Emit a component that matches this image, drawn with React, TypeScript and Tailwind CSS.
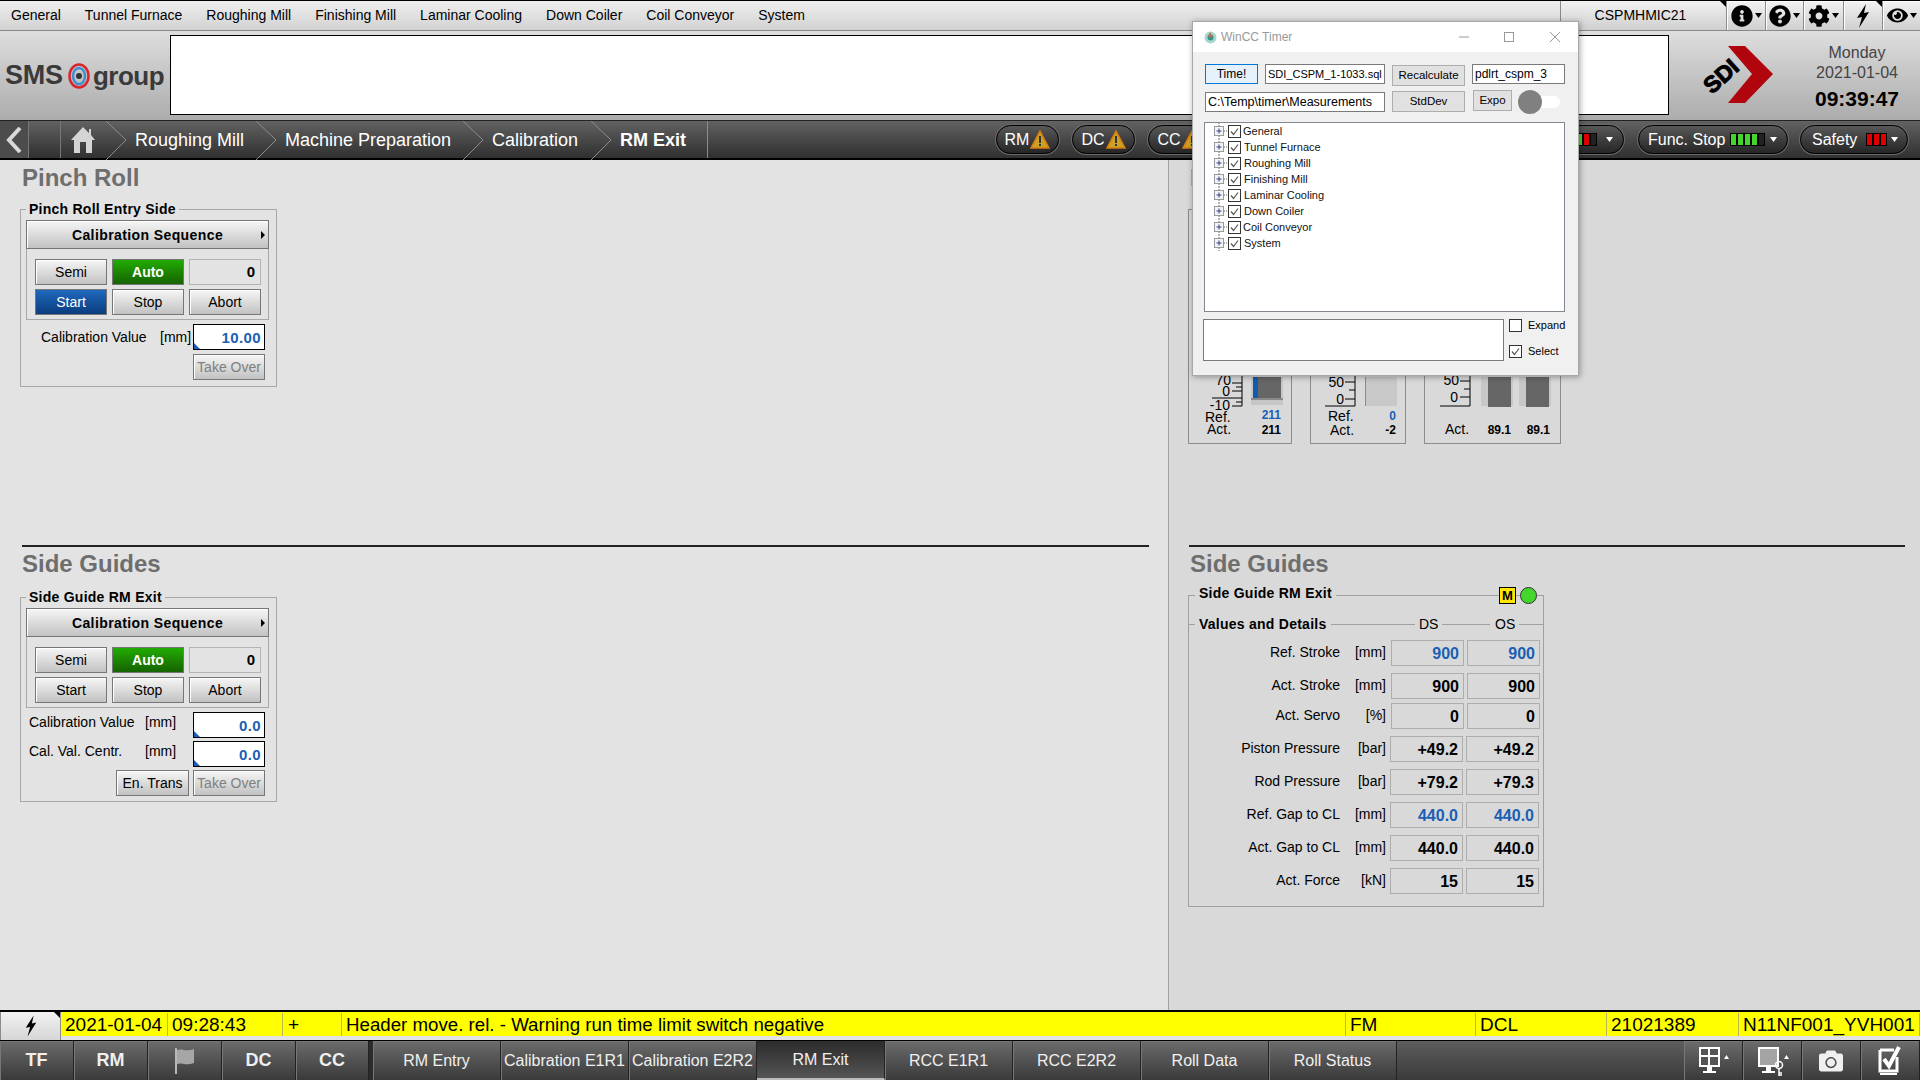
import type { ReactNode } from 'react';
import { FaCamera, FaCog, FaEye, FaInfoCircle, FaQuestionCircle } from 'react-icons/fa';

const grayBtn =
  'flex items-center justify-center border border-[#767676] bg-linear-to-b from-[#f6f6f6] to-[#c2c2c2] text-[14px] text-black shadow-[inset_1px_1px_0_#fff]';
const winBtn = 'flex items-center justify-center border border-[#adadad] bg-[#e1e1e1] text-[11.5px] text-black';
const winInput = 'flex items-center whitespace-nowrap border border-[#7a7a7a] bg-white pl-[2px] text-black';

function TinyArrow({ color = 'black' }: { color?: string }) {
  return (
    <svg width="7" height="5" viewBox="0 0 7 5" className="shrink-0">
      <polygon points="0,0 7,0 3.5,5" fill={color} />
    </svg>
  );
}

function CornerMark() {
  return (
    <svg width="6" height="6" viewBox="0 0 6 6" className="absolute top-0 right-0">
      <polygon points="0,0 6,0 6,6" fill="black" />
    </svg>
  );
}

function Bolt({ className }: { className?: string }) {
  return (
    <svg viewBox="0 0 16 24" className={className}>
      <polygon points="11,0 2,14 7,13 4,24 14,8 9,9" fill="black" />
    </svg>
  );
}

function TopButton({ width, children, mark }: { width: string; children: ReactNode; mark?: boolean }) {
  return (
    <div className={`relative flex h-[29px] ${width} items-center justify-center gap-[2px] border-l border-[#8a8a8a] bg-linear-to-b from-[#f2f2f2] to-[#cfcfcf] shadow-[inset_1px_1px_0_#fff]`}>
      {children}
      {mark && <CornerMark />}
    </div>
  );
}

function TopBar() {
  const menu = ['General', 'Tunnel Furnace', 'Roughing Mill', 'Finishing Mill', 'Laminar Cooling', 'Down Coiler', 'Coil Conveyor', 'System'];
  return (
    <div className="flex h-[31px] shrink-0 items-center border-t border-b border-t-black border-b-[#8a8a8a] bg-linear-to-b from-[#efefef] to-[#d2d2d2] text-[14px] text-black">
      <div className="flex w-[1560px] gap-[24px] pl-[11px]">
        {menu.map((m) => (
          <span key={m}>{m}</span>
        ))}
      </div>
      <div className="relative flex h-[29px] w-[166px] items-center justify-center border-l border-[#8a8a8a] bg-linear-to-b from-[#f2f2f2] to-[#cfcfcf] pr-[6px] text-[14px]">
        CSPMHMIC21
        <CornerMark />
      </div>
      <TopButton width="w-[39px]">
        <FaInfoCircle size={22} />
        <TinyArrow />
      </TopButton>
      <TopButton width="w-[38px]">
        <FaQuestionCircle size={22} />
        <TinyArrow />
      </TopButton>
      <TopButton width="w-[40px]">
        <FaCog size={22} />
        <TinyArrow />
      </TopButton>
      <TopButton width="w-[39px]" mark>
        <Bolt className="h-[24px] w-[16px]" />
      </TopButton>
      <TopButton width="w-[38px]">
        <FaEye size={21} />
        <TinyArrow />
      </TopButton>
    </div>
  );
}

function Header() {
  return (
    <div className="flex h-[89px] shrink-0 bg-linear-to-b from-[#dedede] to-[#acacac]">
      <div className="flex w-[170px] items-center pl-[5px] text-[27px] leading-none font-bold text-[#3a3a3a]">
        <span className="tracking-[-0.2px]">SMS</span>
        <svg width="22" height="26" viewBox="0 0 22 26" className="mr-[3px] ml-[5px] shrink-0">
          <ellipse cx="11" cy="13" rx="9.5" ry="11.5" fill="none" stroke="#d8262c" strokeWidth="2.5" />
          <ellipse cx="11" cy="13" rx="6" ry="8" fill="none" stroke="#3d8fd0" strokeWidth="2.5" />
          <circle cx="11" cy="13" r="3" fill="#333" />
        </svg>
        <span className="text-[26px] tracking-[-0.5px]">group</span>
      </div>
      <div className="mt-[4px] h-[80px] w-[1499px] border border-black bg-white" />
      <svg width="113" height="89" viewBox="1669 31 113 89">
        <polygon points="1728,46 1745,46 1773,74 1745,103 1728,103 1752,74" fill="#b0050d" />
        <text x="1721" y="84" textAnchor="middle" fontSize="23" fontWeight="700" fill="black" stroke="black" strokeWidth="1" transform="rotate(-42 1721 76)">
          SDI
        </text>
      </svg>
      <div className="flex flex-1 flex-col items-center pt-[12px] pl-[12px] text-[16px] leading-[19px] text-[#444]">
        <span>Monday</span>
        <span className="mt-[1px]">2021-01-04</span>
        <span className="mt-[5px] text-[21px] leading-[24px] font-bold text-black">09:39:47</span>
      </div>
    </div>
  );
}

function Crumb({ width, bold, children }: { width: string; bold?: boolean; children: ReactNode }) {
  return (
    <div className={`relative flex h-full ${width} items-center pt-[2px] pl-[29px] text-[18px] text-white ${bold ? 'font-bold' : ''}`}>
      <svg width="20" height="39" viewBox="0 0 20 39" className="absolute top-0 left-0">
        <polyline points="0,0 20,19 0,39" fill="none" stroke="#8c8c8c" strokeWidth="1" />
      </svg>
      {children}
    </div>
  );
}

function WarnTriangle() {
  return (
    <svg width="20" height="20" viewBox="0 0 20 20" className="shrink-0">
      <polygon points="10,1 19,18 1,18" fill="#c9a227" stroke="#d97a10" strokeWidth="1.5" />
      <rect x="9" y="6" width="2" height="7" fill="#333" />
      <rect x="9" y="14" width="2" height="2" fill="#333" />
    </svg>
  );
}

function Pill({ width, children, className = '' }: { width: string; children: ReactNode; className?: string }) {
  return (
    <div className={`flex h-[29px] ${width} items-center rounded-full border border-black bg-linear-to-b from-[#585858] to-[#262626] text-[16px] text-white shadow-[0_0_0_1px_#6a6a6a] ${className}`}>
      {children}
    </div>
  );
}

function Bars({ colors }: { colors: string[] }) {
  return (
    <div className="flex h-[13px]">
      {colors.map((c, i) => (
        <div key={i} className={`h-full w-[7px] border border-black ${c}`} />
      ))}
    </div>
  );
}

function BreadcrumbBar() {
  return (
    <div className="flex h-[40px] shrink-0 items-center border-t border-b-2 border-t-[#222] border-b-black bg-linear-to-b from-[#626262] to-[#303030]">
      <div className="flex h-full w-[29px] items-center justify-center border-r border-[#777] bg-[#4c4c4c]">
        <svg width="18" height="26" viewBox="0 0 18 26">
          <polyline points="15,1 4,13 15,25" fill="none" stroke="#d8d8d8" strokeWidth="4" />
        </svg>
      </div>
      <div className="h-full w-[32px] border-r border-[#777]" />
      <div className="flex h-full w-[45px] items-center pl-[10px]">
        <svg width="24" height="26" viewBox="0 0 24 26">
          <path d="M12 0 L18 6 V2 H20 V8 L24 13 L21 13 V26 H15 V15 H9 V26 H3 V13 L0 13 Z" fill="#d4d4d4" />
        </svg>
      </div>
      <Crumb width="w-[150px]">Roughing Mill</Crumb>
      <Crumb width="w-[207px]">Machine Preparation</Crumb>
      <Crumb width="w-[128px]">Calibration</Crumb>
      <Crumb width="w-[116px]" bold>
        RM Exit
      </Crumb>
      <div className="h-full w-px bg-[#8c8c8c]" />
      <div className="ml-[288px] flex gap-[13px]">
        <Pill width="w-[63px]" className="justify-center gap-[1px]">
          RM
          <WarnTriangle />
        </Pill>
        <Pill width="w-[63px]" className="justify-center gap-[1px]">
          DC
          <WarnTriangle />
        </Pill>
        <Pill width="w-[63px]" className="justify-center gap-[1px]">
          CC
          <WarnTriangle />
        </Pill>
      </div>
      <div className="ml-auto flex items-center gap-[12px] pr-[12px]">
        <Pill width="w-[160px]" className="mr-[2px] justify-end gap-[9px] pr-[10px]">
          <Bars colors={['bg-[#e00000]', 'bg-[#44d62c]', 'bg-[#e00000]', 'bg-[#222]']} />
          <TinyArrow color="white" />
        </Pill>
        <Pill width="w-[150px]" className="pl-[9px]">
          Func. Stop
          <div className="ml-[5px]">
            <Bars colors={['bg-[#44d62c]', 'bg-[#44d62c]', 'bg-[#44d62c]', 'bg-[#44d62c]', 'bg-[#222]']} />
          </div>
          <div className="ml-[5px]">
            <TinyArrow color="white" />
          </div>
        </Pill>
        <Pill width="w-[108px]" className="pl-[11px]">
          Safety
          <div className="ml-[9px]">
            <Bars colors={['bg-[#e00000]', 'bg-[#e00000]', 'bg-[#e00000]']} />
          </div>
          <div className="ml-[4px]">
            <TinyArrow color="white" />
          </div>
        </Pill>
      </div>
    </div>
  );
}

function Legend({ children }: { children: ReactNode }) {
  return <legend className="px-[3px] text-[14px] leading-4 font-bold tracking-[0.25px] text-black">{children}</legend>;
}

function SeqButton() {
  return (
    <div className={`${grayBtn} relative mt-[3px] h-[29px] w-[243px] pt-px font-bold tracking-[0.4px]`}>
      Calibration Sequence
      <svg width="4" height="8" viewBox="0 0 4 8" className="absolute top-[10px] right-[3px]">
        <polygon points="0,0 4,4 0,8" fill="black" />
      </svg>
    </div>
  );
}

function SeqGroup({ startActive }: { startActive?: boolean }) {
  return (
    <div className="flex h-[71px] w-[243px] flex-col gap-[4px] border-x border-b border-[#a8a8a8] pt-[10px] pl-[8px]">
      <div className="flex gap-[5px]">
        <div className={`${grayBtn} h-[26px] w-[72px]`}>Semi</div>
        <div className="flex h-[26px] w-[72px] items-center justify-center border border-[#767676] bg-linear-to-b from-[#22ac04] to-[#156300] text-[14px] font-bold text-white">Auto</div>
        <div className="flex h-[26px] w-[72px] items-center justify-end border border-[#b4b4b4] pr-[5px] text-[15px] font-bold text-black">0</div>
      </div>
      <div className="flex gap-[5px]">
        {startActive ? (
          <div className="flex h-[26px] w-[72px] items-center justify-center border border-[#767676] bg-linear-to-b from-[#2069bd] to-[#0a3d7e] text-[14px] text-white">Start</div>
        ) : (
          <div className={`${grayBtn} h-[26px] w-[72px]`}>Start</div>
        )}
        <div className={`${grayBtn} h-[26px] w-[72px]`}>Stop</div>
        <div className={`${grayBtn} h-[26px] w-[72px]`}>Abort</div>
      </div>
    </div>
  );
}

function ValueInput({ value }: { value: string }) {
  return (
    <div className="relative flex h-[26px] w-[72px] items-center justify-end border border-black bg-white pt-[2px] pr-[3px] text-[15px] font-bold tracking-[0.4px] text-[#1a5fb4]">
      {value}
      <svg width="6" height="6" viewBox="0 0 6 6" className="absolute bottom-0 left-0">
        <polygon points="0,0 6,6 0,6" fill="#1a5fb4" />
      </svg>
    </div>
  );
}

function TakeOver() {
  return <div className={`${grayBtn} h-[26px] w-[72px] text-[#808080]!`}>Take Over</div>;
}

function PinchRollBox() {
  return (
    <fieldset className="mt-[9px] w-[257px] border border-[#a8a8a8] px-[5px] pb-[6px]">
      <Legend>Pinch Roll Entry Side</Legend>
      <SeqButton />
      <SeqGroup startActive />
      <div className="mt-[4px] flex items-center text-[14px] text-black">
        <span className="ml-[15px] w-[119px] pt-px">Calibration Value</span>
        <span className="w-[33px] pt-px">[mm]</span>
        <ValueInput value="10.00" />
      </div>
      <div className="mt-[4px] ml-[167px]">
        <TakeOver />
      </div>
    </fieldset>
  );
}

function SideGuideBox() {
  return (
    <fieldset className="mt-[11px] w-[257px] border border-[#a8a8a8] px-[5px] pb-[5px]">
      <Legend>Side Guide RM Exit</Legend>
      <SeqButton />
      <SeqGroup />
      <div className="mt-[4px] flex text-[14px] text-black">
        <span className="ml-[3px] w-[116px]">Calibration Value</span>
        <span className="w-[48px]">[mm]</span>
        <ValueInput value="0.0" />
      </div>
      <div className="mt-[3px] flex text-[14px] text-black">
        <span className="ml-[3px] w-[116px]">Cal. Val. Centr.</span>
        <span className="w-[48px]">[mm]</span>
        <ValueInput value="0.0" />
      </div>
      <div className="mt-[3px] ml-[90px] flex gap-[4px]">
        <div className={`${grayBtn} h-[26px] w-[73px]`}>En. Trans</div>
        <TakeOver />
      </div>
    </fieldset>
  );
}

function ScaleText({ x, y, children, anchor = 'end', bold, fill = 'black' }: { x: number; y: number; children: string; anchor?: 'start' | 'end'; bold?: boolean; fill?: string }) {
  return (
    <text x={x} y={y} textAnchor={anchor} fontSize={bold ? 12 : 14} fontWeight={bold ? 700 : 400} fill={fill}>
      {children}
    </text>
  );
}

function GaugeBox({ width, view, children }: { width: string; view: string; children: ReactNode }) {
  return (
    <div className={`h-[235px] ${width} border border-[#8c8c8c]`}>
      <svg viewBox={view} className="h-full w-full">
        {children}
      </svg>
    </div>
  );
}

function Gauges() {
  return (
    <div className="mt-[17px] flex">
      <GaugeBox width="w-[104px]" view="1188 209 102 233">
        <path d="M1241 370 V405 M1231 382 H1241 M1235 386 H1241 M1231 390 H1241 M1211 397 H1241 M1235 401 H1241 M1231 405 H1241" stroke="black" fill="none" />
        <ScaleText x={1230} y={384}>70</ScaleText>
        <ScaleText x={1229} y={395}>0</ScaleText>
        <ScaleText x={1229} y={409}>-10</ScaleText>
        <rect x="1250" y="376" width="32" height="28" fill="#c6c6c6" />
        <rect x="1257" y="376" width="23" height="21" fill="#666" />
        <rect x="1252" y="376" width="5" height="21" fill="#0f5cb0" />
        <rect x="1250" y="397" width="32" height="2" fill="#8a8a8a" />
        <ScaleText x={1204} y={421} anchor="start">Ref.</ScaleText>
        <ScaleText x={1206} y={433} anchor="start">Act.</ScaleText>
        <ScaleText x={1280} y={418} bold fill="#1a5fb4">211</ScaleText>
        <ScaleText x={1280} y={433} bold>211</ScaleText>
      </GaugeBox>
      <div className="ml-[18px]">
        <GaugeBox width="w-[96px]" view="1310 209 94 233">
          <path d="M1354 370 V405 M1344 381 H1354 M1348 389 H1354 M1344 398 H1354 M1324 405 H1354" stroke="black" fill="none" />
          <ScaleText x={1343} y={386}>50</ScaleText>
          <ScaleText x={1343} y={403}>0</ScaleText>
          <rect x="1364" y="376" width="32" height="29" fill="#c8c8c8" />
          <rect x="1364" y="376" width="1" height="29" fill="#8a8a8a" />
          <ScaleText x={1327} y={420} anchor="start">Ref.</ScaleText>
          <ScaleText x={1329} y={434} anchor="start">Act.</ScaleText>
          <ScaleText x={1395} y={419} bold fill="#1a5fb4">0</ScaleText>
          <ScaleText x={1395} y={433} bold>-2</ScaleText>
        </GaugeBox>
      </div>
      <div className="ml-[18px]">
        <GaugeBox width="w-[137px]" view="1424 209 135 233">
          <path d="M1469 370 V405 M1459 380 H1469 M1463 388 H1469 M1459 396 H1469 M1439 405 H1469" stroke="black" fill="none" />
          <ScaleText x={1458} y={384}>50</ScaleText>
          <ScaleText x={1457} y={401}>0</ScaleText>
          <rect x="1480" y="376" width="32" height="29" fill="#c8c8c8" />
          <rect x="1487" y="376" width="23" height="30" fill="#666" />
          <rect x="1518" y="376" width="32" height="29" fill="#c8c8c8" />
          <rect x="1525" y="376" width="23" height="30" fill="#666" />
          <ScaleText x={1444} y={433} anchor="start">Act.</ScaleText>
          <ScaleText x={1510} y={433} bold>89.1</ScaleText>
          <ScaleText x={1549} y={433} bold>89.1</ScaleText>
        </GaugeBox>
      </div>
    </div>
  );
}

interface DetailRow {
  label: string;
  unit: string;
  ds: string;
  os: string;
  blue?: boolean;
  top: string;
  inset: string;
}

const detailRows: DetailRow[] = [
  { label: 'Ref. Stroke', unit: '[mm]', ds: '900', os: '900', blue: true, top: 'mt-[8px]', inset: 'ml-[5px]' },
  { label: 'Act. Stroke', unit: '[mm]', ds: '900', os: '900', top: 'mt-[7px]', inset: 'ml-[5px]' },
  { label: 'Act. Servo', unit: '[%]', ds: '0', os: '0', top: 'mt-[4px]', inset: 'ml-[5px]' },
  { label: 'Piston Pressure', unit: '[bar]', ds: '+49.2', os: '+49.2', top: 'mt-[7px]', inset: 'ml-[4px]' },
  { label: 'Rod Pressure', unit: '[bar]', ds: '+79.2', os: '+79.3', top: 'mt-[7px]', inset: 'ml-[4px]' },
  { label: 'Ref. Gap to CL', unit: '[mm]', ds: '440.0', os: '440.0', blue: true, top: 'mt-[7px]', inset: 'ml-[4px]' },
  { label: 'Act. Gap to CL', unit: '[mm]', ds: '440.0', os: '440.0', top: 'mt-[7px]', inset: 'ml-[4px]' },
  { label: 'Act. Force', unit: '[kN]', ds: '15', os: '15', top: 'mt-[7px]', inset: 'ml-[4px]' },
];

function ValueCell({ value, blue }: { value: string; blue?: boolean }) {
  return (
    <div className={`flex h-[26px] w-[73px] items-center justify-end border border-[#adadad] pt-px pr-[4px] text-[16px] font-bold ${blue ? 'text-[#1a5fb4]' : 'text-black'}`}>
      {value}
    </div>
  );
}

function DetailsBox() {
  return (
    <fieldset className="relative mt-[9px] w-[356px] border border-[#a0a0a0] pb-[12px]">
      <legend className="relative -top-[2px] ml-[6px] px-[4px] text-[14px] leading-4 font-bold tracking-[0.25px] text-black">Side Guide RM Exit</legend>
      <div className="absolute -top-[16px] right-[6px] flex gap-[4px]">
        <div className="flex h-[17px] w-[17px] items-center justify-center border border-black bg-[#ffe600] text-[13px] font-bold text-black">M</div>
        <div className="h-[17px] w-[17px] rounded-full border border-[#333] bg-[#44d62c]" />
      </div>
      <div className="mt-[13px] flex h-4 items-center text-[14px] text-black">
        <div className="h-px w-[6px] bg-[#a0a0a0]" />
        <span className="ml-[4px] w-[128px] whitespace-nowrap font-bold tracking-[0.25px]">Values and Details</span>
        <div className="ml-[4px] h-px w-[84px] bg-[#a0a0a0]" />
        <span className="ml-[4px] w-[19px]">DS</span>
        <div className="ml-[4px] h-px w-[48px] bg-[#a0a0a0]" />
        <span className="ml-[5px] w-[20px]">OS</span>
        <div className="ml-[4px] h-px flex-1 bg-[#a0a0a0]" />
      </div>
      {detailRows.map((r) => (
        <div key={r.label} className={`flex items-center text-[14px] text-black ${r.top}`}>
          <span className="w-[151px] pb-[2px] text-right">{r.label}</span>
          <span className="w-[46px] pb-[2px] text-right">{r.unit}</span>
          <div className={`flex gap-[3px] ${r.inset}`}>
            <ValueCell value={r.ds} blue={r.blue} />
            <ValueCell value={r.os} blue={r.blue} />
          </div>
        </div>
      ))}
    </fieldset>
  );
}

function Content() {
  return (
    <div className="flex h-[850px] shrink-0">
      <div className="w-[1169px] border-r border-[#a0a0a0] bg-[#e3e3e3] pl-[20px]">
        <div className="h-[385px] pt-[4px]">
          <h2 className="pl-[2px] text-[24px] leading-[28px] font-bold text-[#6e6e6e]">Pinch Roll</h2>
          <PinchRollBox />
        </div>
        <div className="ml-[2px] h-[2px] w-[1127px] bg-[#222]" />
        <div className="pt-[3px]">
          <h2 className="pl-[2px] text-[24px] leading-[28px] font-bold text-[#6e6e6e]">Side Guides</h2>
          <SideGuideBox />
        </div>
      </div>
      <div className="flex-1 bg-[#d9d9d9] pl-[19px]">
        <div className="h-[385px] pt-[4px]">
          <h2 className="pl-[2px] text-[24px] leading-[28px] font-bold text-[#6e6e6e]">Pinch Roll</h2>
          <Gauges />
        </div>
        <div className="ml-[1px] h-[2px] w-[716px] bg-[#222]" />
        <div className="pt-[3px]">
          <h2 className="pl-[2px] text-[24px] leading-[28px] font-bold text-[#6e6e6e]">Side Guides</h2>
          <DetailsBox />
        </div>
      </div>
    </div>
  );
}

function AlarmBar() {
  const cells = [
    { w: 'w-[107px]', t: '2021-01-04' },
    { w: 'w-[115px]', t: '09:28:43' },
    { w: 'w-[59px]', t: '+', pad: 'pl-[5px]' },
    { w: 'w-[1004px] text-[18.7px]', t: 'Header move. rel. - Warning run time limit switch negative' },
    { w: 'w-[130px]', t: 'FM' },
    { w: 'w-[131px]', t: 'DCL' },
    { w: 'w-[132px]', t: '21021389' },
    { w: 'flex-1', t: 'N11NF001_YVH001' },
  ];
  return (
    <div className="flex h-[30px] shrink-0 border-t-2 border-black bg-[#e3e3e3]">
      <div className="relative flex h-full w-[61px] items-center justify-center border-x border-[#8a8a8a] bg-linear-to-b from-[#f2f2f2] to-[#d6d6d6]">
        <Bolt className="h-[22px] w-[14px]" />
        <CornerMark />
      </div>
      <div className="flex h-[24px] flex-1 bg-[#ffff00] pt-px text-[19px] leading-[23px] text-black">
        {cells.map((c) => (
          <div key={c.t} className={`${c.w} overflow-hidden whitespace-nowrap border-r border-[#b9b950] ${c.pad ?? 'pl-[4px]'}`}>
            {c.t}
          </div>
        ))}
      </div>
    </div>
  );
}

function NavButton({ width, children, active, bold }: { width: string; children: ReactNode; active?: boolean; bold?: boolean }) {
  return (
    <div
      className={`flex h-full ${width} items-center justify-center border-r border-[#222] text-[#f0f0f0] ${bold ? 'text-[18px] font-bold' : 'text-[16px]'} ${
        active ? 'border-b-2 border-b-[#bbb] bg-linear-to-b from-[#2c2c2c] to-[#555]' : 'bg-linear-to-b from-[#6c6c6c] to-[#3a3a3a] shadow-[inset_1px_1px_0_#777]'
      }`}
    >
      {children}
    </div>
  );
}

function BottomNav() {
  return (
    <div className="flex h-[40px] shrink-0 border-t border-black bg-linear-to-b from-[#5e5e5e] to-[#3a3a3a]">
      <NavButton width="w-[74px]" bold>TF</NavButton>
      <NavButton width="w-[74px]" bold>RM</NavButton>
      <NavButton width="w-[74px]">
        <svg width="22" height="26" viewBox="0 0 22 26">
          <rect x="1" y="0" width="2" height="26" fill="#b8b8b8" />
          <path d="M3 2 C8 0 12 4 20 1 V15 C12 18 8 14 3 16 Z" fill="#a6a6a6" />
        </svg>
      </NavButton>
      <NavButton width="w-[74px]" bold>DC</NavButton>
      <NavButton width="w-[73px]" bold>CC</NavButton>
      <div className="h-full w-[4px] bg-[#2c2c2c]" />
      <NavButton width="w-[128px]">RM Entry</NavButton>
      <NavButton width="w-[128px]">Calibration E1R1</NavButton>
      <NavButton width="w-[128px]">Calibration E2R2</NavButton>
      <NavButton width="w-[128px]" active>RM Exit</NavButton>
      <NavButton width="w-[128px]">RCC E1R1</NavButton>
      <NavButton width="w-[128px]">RCC E2R2</NavButton>
      <NavButton width="w-[128px]">Roll Data</NavButton>
      <NavButton width="w-[128px]">Roll Status</NavButton>
      <div className="w-[287px]" />
      <NavButton width="w-[59px]">
        <svg width="34" height="30" viewBox="0 0 34 30" className="ml-[3px]">
          <rect x="1" y="1" width="21" height="20" fill="white" />
          <path d="M3 3 H10 V9 H3 Z M12 3 H20 V9 H12 Z M3 11 H10 V19 H3 Z M12 11 H20 V19 H12 Z" fill="#555" />
          <rect x="9" y="21" width="5" height="4" fill="white" />
          <rect x="5" y="25" width="13" height="2" fill="white" />
          <polygon points="26,13 31,13 28.5,9" fill="white" />
        </svg>
      </NavButton>
      <NavButton width="w-[59px]">
        <svg width="34" height="30" viewBox="0 0 34 30" className="ml-[3px]">
          <rect x="1" y="1" width="21" height="20" fill="white" />
          <rect x="3" y="3" width="17" height="16" fill="#a4a4a4" />
          <rect x="9" y="21" width="5" height="4" fill="white" />
          <rect x="5" y="25" width="13" height="2" fill="white" />
          <circle cx="22" cy="19" r="3.5" fill="none" stroke="white" strokeWidth="1.5" />
          <path d="M22 22 V30 M22 27 H25 M22 29 H25" stroke="white" strokeWidth="1.5" />
          <polygon points="27,13 32,13 29.5,9" fill="white" />
        </svg>
      </NavButton>
      <NavButton width="w-[59px]">
        <FaCamera size={24} />
      </NavButton>
      <NavButton width="w-[59px]">
        <svg width="26" height="32" viewBox="0 0 26 32">
          <path d="M3 5 H17 M3 5 V26 H20 V12" fill="none" stroke="white" strokeWidth="3" />
          <path d="M7 14 L12 21 L22 2" fill="none" stroke="white" strokeWidth="4" />
          <rect x="3" y="28" width="17" height="2" fill="white" />
        </svg>
      </NavButton>
    </div>
  );
}

function TreeRow({ label, nudge }: { label: string; nudge: string }) {
  return (
    <div className="flex h-[16px] items-center text-[11px] text-[#111]">
      <svg width="24" height="16" viewBox="0 0 24 16" className="shrink-0">
        <rect x="0.5" y="3.5" width="9" height="9" fill="#f4f4f4" stroke="#9a9a9a" />
        <path d="M2.5 8 H7.5 M5 5.5 V10.5" stroke="#2b3f8f" />
        <path d="M5 0 V3 M5 13 V16 M10 8 H14" stroke="#666" strokeDasharray="1 1" />
      </svg>
      <svg width="13" height="13" viewBox="0 0 13 13" className="-ml-[10px] shrink-0">
        <rect x="0.5" y="0.5" width="12" height="12" fill="white" stroke="#333" />
        <path d="M3 6.5 L5.5 9.5 L10 3.5" fill="none" stroke="#555" strokeWidth="1.2" />
      </svg>
      <span className={nudge}>{label}</span>
    </div>
  );
}

function TimerWindow() {
  return (
    <div className="absolute top-[21px] left-[1192px] flex h-[355px] w-[387px] flex-col border border-[#a8a8a8] bg-[#f0f0f0] shadow-[1px_1px_6px_rgba(0,0,0,0.35)]">
      <div className="flex h-[30px] shrink-0 items-center bg-white pl-[11px] text-[12px] text-[#999]">
        <svg width="13" height="13" viewBox="0 0 13 13">
          <circle cx="6.5" cy="6.5" r="6" fill="#a7d8cf" />
          <circle cx="6.5" cy="6.5" r="3" fill="#3d8f8a" />
          <path d="M6 1 L9 6 H4 Z" fill="#c06a50" />
        </svg>
        <span className="ml-[4px]">WinCC Timer</span>
        <svg width="112" height="12" viewBox="0 0 112 12" className="mr-[7px] ml-auto">
          <path d="M0 6 H10" stroke="#999" />
          <rect x="45.5" y="1.5" width="9" height="9" fill="none" stroke="#999" />
          <path d="M91 1 L101 11 M101 1 L91 11" stroke="#999" />
        </svg>
      </div>
      <div className="pl-[12px]">
        <div className="mt-[12px] flex h-[20px]">
          <div className="flex h-[20px] w-[53px] items-center justify-center border border-[#0078d7] bg-[#e5f1fb] text-[12px] text-black">Time!</div>
          <div className={`${winInput} ml-[7px] h-[20px] w-[120px] text-[11px]`}>SDI_CSPM_1-1033.sql</div>
          <div className={`${winBtn} mt-px ml-[7px] h-[21px] w-[73px] shrink-0`}>Recalculate</div>
          <div className={`${winInput} ml-[7px] h-[20px] w-[93px] text-[12px]`}>pdlrt_cspm_3</div>
        </div>
        <div className="mt-[8px] flex h-[20px]">
          <div className={`${winInput} h-[20px] w-[180px] text-[12.5px]`}>C:\Temp\timer\Measurements</div>
          <div className={`${winBtn} -mt-px ml-[7px] h-[21px] w-[73px] shrink-0`}>StdDev</div>
          <div className={`${winBtn} -mt-[2px] ml-[8px] h-[21px] w-[39px] shrink-0`}>Expo</div>
          <div className="relative -mt-[2px] ml-[6px] flex h-[24px] w-[42px] shrink-0 items-center">
            <div className="ml-[10px] h-[12px] w-[32px] rounded-full bg-white" />
            <div className="absolute top-0 left-0 h-[24px] w-[24px] rounded-full bg-[#808080]" />
          </div>
        </div>
        <div className="mt-[10px] -ml-px h-[190px] w-[361px] border border-[#828790] bg-white pl-[9px]">
          <TreeRow label="General" nudge="ml-[2px]" />
          <TreeRow label="Tunnel Furnace" nudge="ml-[3px]" />
          <TreeRow label="Roughing Mill" nudge="ml-[3px]" />
          <TreeRow label="Finishing Mill" nudge="ml-[3px]" />
          <TreeRow label="Laminar Cooling" nudge="ml-[3px]" />
          <TreeRow label="Down Coiler" nudge="ml-[3px]" />
          <TreeRow label="Coil Conveyor" nudge="ml-[2px]" />
          <TreeRow label="System" nudge="ml-[3px]" />
        </div>
        <div className="mt-[7px] flex">
          <div className="-ml-[2px] h-[42px] w-[301px] border border-[#7a7a7a] bg-white" />
          <div className="ml-[5px] flex flex-col text-[11px] text-black">
            <div className="flex h-[13px] items-center">
              <div className="h-[13px] w-[13px] border border-[#333] bg-white" />
              <span className="ml-[6px]">Expand</span>
            </div>
            <div className="mt-[13px] flex h-[13px] items-center">
              <svg width="13" height="13" viewBox="0 0 13 13">
                <rect x="0.5" y="0.5" width="12" height="12" fill="white" stroke="#333" />
                <path d="M3 6.5 L5.5 9.5 L10 3.5" fill="none" stroke="#555" strokeWidth="1.2" />
              </svg>
              <span className="ml-[6px]">Select</span>
            </div>
          </div>
        </div>
      </div>
    </div>
  );
}

export default function App() {
  return (
    <div className="relative flex h-[1080px] w-[1920px] flex-col overflow-hidden bg-[#e3e3e3] font-['Liberation_Sans',Arial,sans-serif]">
      <TopBar />
      <Header />
      <BreadcrumbBar />
      <Content />
      <AlarmBar />
      <BottomNav />
      <TimerWindow />
    </div>
  );
}
